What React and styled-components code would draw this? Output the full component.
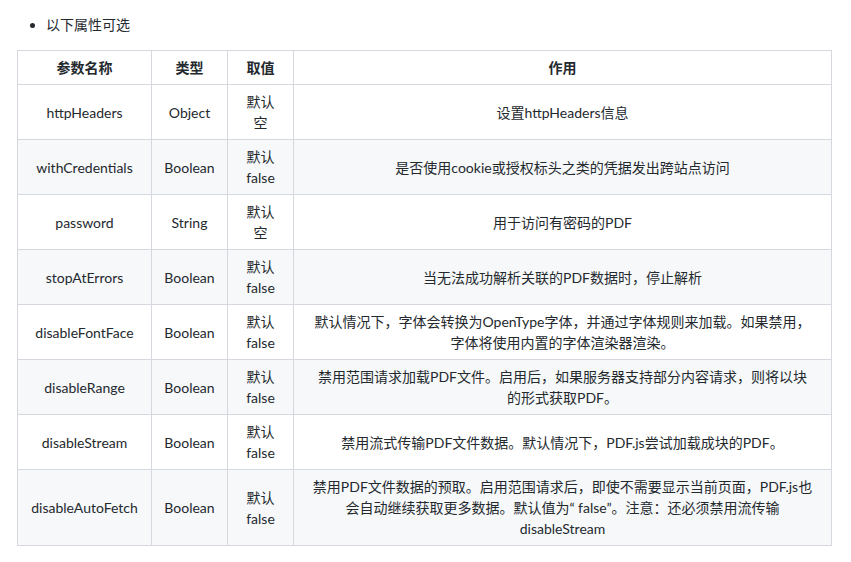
import React from "react"
import styled, { createGlobalStyle } from "styled-components"

const GlobalStyle = createGlobalStyle`
  body {
    margin: 0;
    background: #fff;
    font-family: Lato, "Noto Sans CJK SC", sans-serif;
    font-size: 14px;
    color: #24292e;
  }
`

const rows = [
  ["httpHeaders", "Object", "默认空", "设置httpHeaders信息"],
  ["withCredentials", "Boolean", "默认false", "是否使用cookie或授权标头之类的凭据发出跨站点访问"],
  ["password", "String", "默认空", "用于访问有密码的PDF"],
  ["stopAtErrors", "Boolean", "默认false", "当无法成功解析关联的PDF数据时，停止解析"],
  ["disableFontFace", "Boolean", "默认false", "默认情况下，字体会转换为OpenType字体，并通过字体规则来加载。如果禁用，字体将使用内置的字体渲染器渲染。"],
  ["disableRange", "Boolean", "默认false", "禁用范围请求加载PDF文件。启用后，如果服务器支持部分内容请求，则将以块的形式获取PDF。"],
  ["disableStream", "Boolean", "默认false", "禁用流式传输PDF文件数据。默认情况下，PDF.js尝试加载成块的PDF。"],
  ["disableAutoFetch", "Boolean", "默认false", "禁用PDF文件数据的预取。启用范围请求后，即使不需要显示当前页面，PDF.js也会自动继续获取更多数据。默认值为“ false”。注意：还必须禁用流传输 disableStream"],
]

export default function App() {
  return (
    <Page>
      <GlobalStyle />
      <List>
        <li>以下属性可选</li>
      </List>
      <Table>
        <colgroup>
          <col style={{ width: 134 }} />
          <col style={{ width: 76 }} />
          <col style={{ width: 66 }} />
          <col />
        </colgroup>
        <thead>
          <tr>
            <Th>参数名称</Th>
            <Th>类型</Th>
            <Th>取值</Th>
            <Th $wide>作用</Th>
          </tr>
        </thead>
        <tbody>
          {rows.map((r, i) => (
            <Row key={r[0]} $striped={i % 2 === 1}>
              {r.map((c, j) => <Td key={j} $wide={j === 3}>{c}</Td>)}
            </Row>
          ))}
        </tbody>
      </Table>
    </Page>
  )
}

const Page = styled.div`
  padding: 14px 20px 16px 17px;
`
const List = styled.ul`
  margin: 0 0 15px;
  padding-left: 29px;
  line-height: 21px;
`
const Table = styled.table`
  width: 815px;
  border-collapse: collapse;
  table-layout: fixed;
  line-height: 21px;
`
const Th = styled.th`
  border: 1px solid #d5d9df;
  padding: ${props => props.$wide ? '6px 18px' : '6px 12px'};
  font-weight: 700;
  text-align: center;
`
const Row = styled.tr`
  background: ${props => props.$striped ? '#f6f8fa' : '#fff'};
`
const Td = styled.td`
  border: 1px solid #d5d9df;
  padding: ${props => props.$wide ? '6px 18px' : '6px 12px'};
  text-align: center;
  white-space: pre-wrap;
`
